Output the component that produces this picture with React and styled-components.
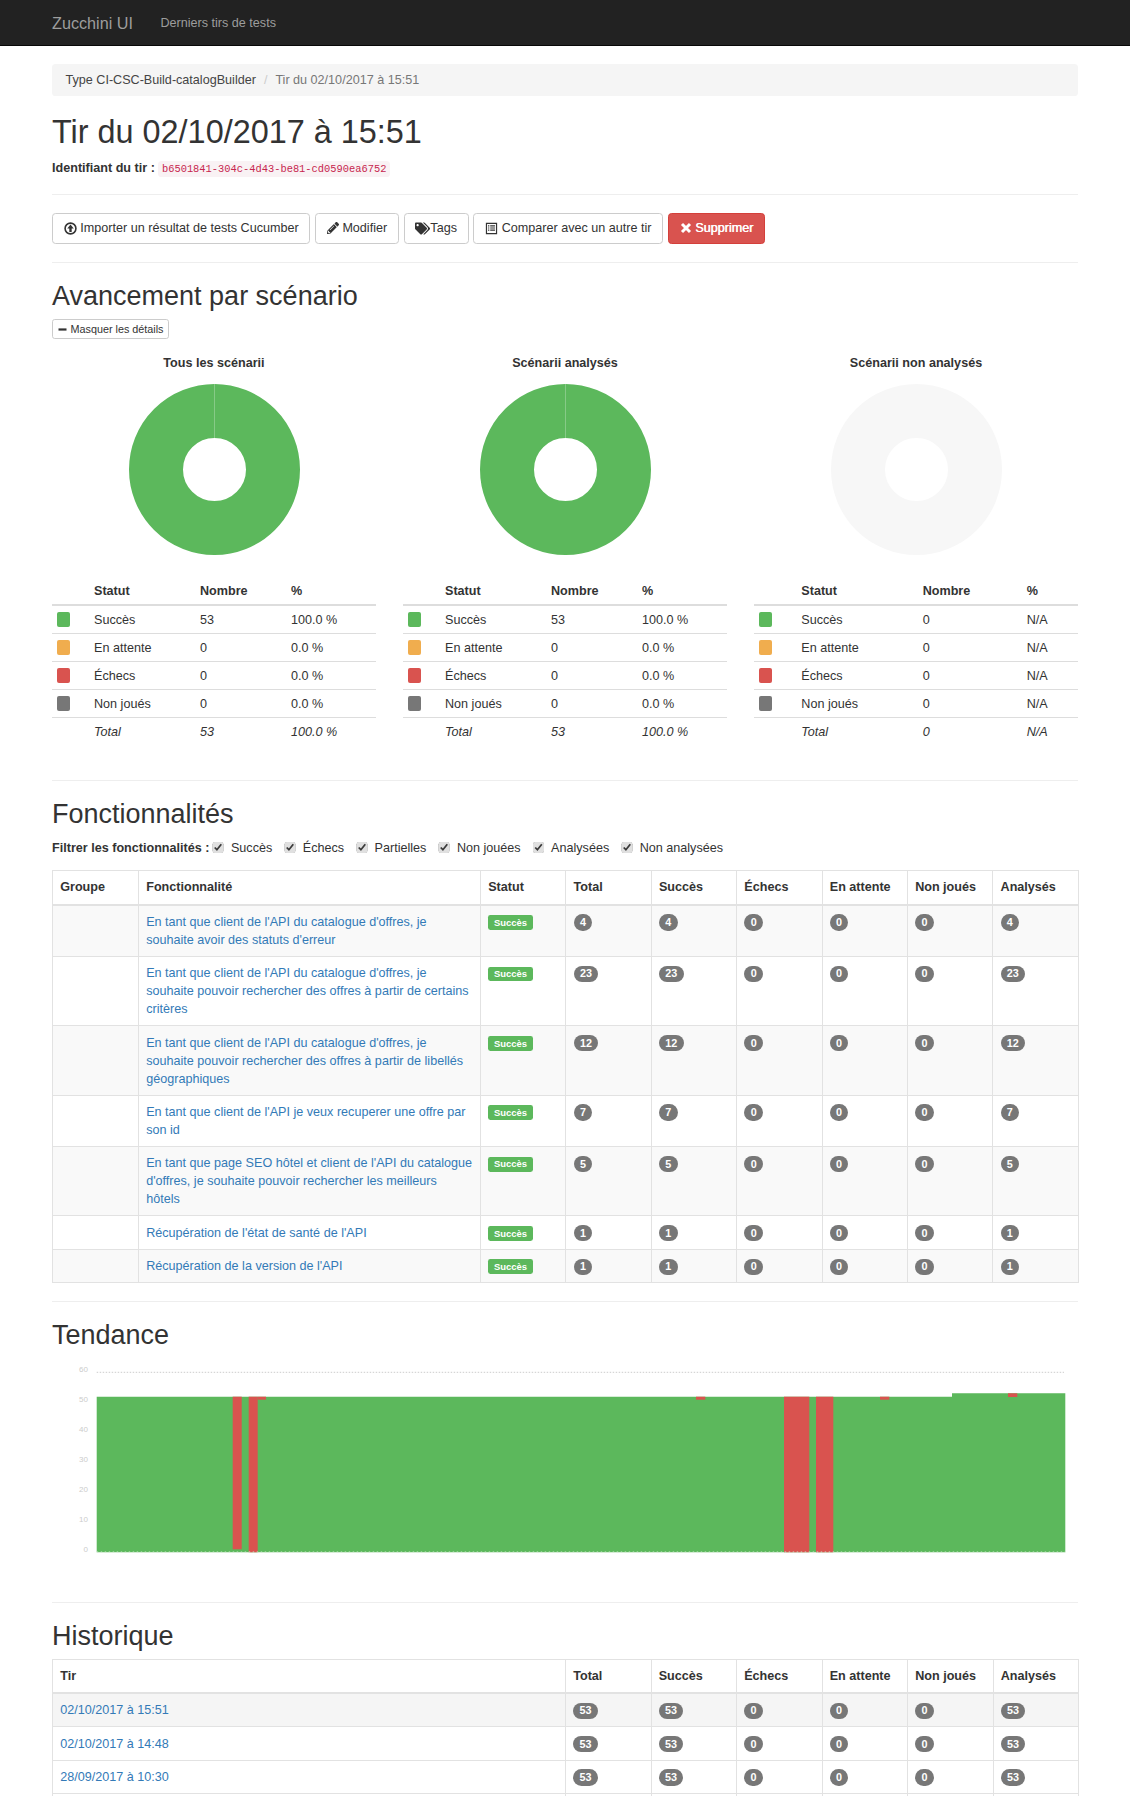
import React from "react";
import styled, { createGlobalStyle } from "styled-components";
import { FaPencilAlt, FaTags } from "react-icons/fa";

const GREEN = "#5cb85c";
const ORANGE = "#f0ad4e";
const RED = "#d9534f";
const GREY = "#777777";

const features = [
  { name: "En tant que client de l'API du catalogue d'offres, je souhaite avoir des statuts d'erreur", total: 4 },
  { name: "En tant que client de l'API du catalogue d'offres, je souhaite pouvoir rechercher des offres à partir de certains critères", total: 23 },
  { name: "En tant que client de l'API du catalogue d'offres, je souhaite pouvoir rechercher des offres à partir de libellés géographiques", total: 12 },
  { name: "En tant que client de l'API je veux recuperer une offre par son id", total: 7 },
  { name: "En tant que page SEO hôtel et client de l'API du catalogue d'offres, je souhaite pouvoir rechercher les meilleurs hôtels", total: 5 },
  { name: "Récupération de l'état de santé de l'API", total: 1 },
  { name: "Récupération de la version de l'API", total: 1 },
];

const history = ["02/10/2017 à 15:51", "02/10/2017 à 14:48", "28/09/2017 à 10:30"];
const countHeaders = ["Total", "Succès", "Échecs", "En attente", "Non joués", "Analysés"];
const filters = ["Succès", "Échecs", "Partielles", "Non jouées", "Analysées", "Non analysées"];

const charts = [
  { title: "Tous les scénarii", color: GREEN, seam: true, counts: [53, 0, 0, 0], total: 53, pct: ["100.0 %", "0.0 %", "0.0 %", "0.0 %"], totalPct: "100.0 %", widths: [37.5, 106, 91, 89.5] },
  { title: "Scénarii analysés", color: GREEN, seam: true, counts: [53, 0, 0, 0], total: 53, pct: ["100.0 %", "0.0 %", "0.0 %", "0.0 %"], totalPct: "100.0 %", widths: [37.5, 106, 91, 89.5] },
  { title: "Scénarii non analysés", color: "#f7f7f7", seam: false, counts: [0, 0, 0, 0], total: 0, pct: ["N/A", "N/A", "N/A", "N/A"], totalPct: "N/A", widths: [42.8, 121.4, 104, 55.8] },
];

const statuses = [
  { label: "Succès", color: GREEN },
  { label: "En attente", color: ORANGE },
  { label: "Échecs", color: RED },
  { label: "Non joués", color: GREY },
];

const trendLabels = [60, 50, 40, 30, 20, 10, 0];
const redBars = [
  [180.7, 189.7, 37.7, 190.3],
  [196.7, 205.7, 37.7, 193.3],
  [205.7, 214, 37.7, 40.7],
  [644, 653.3, 37.7, 40.7],
  [732, 757.3, 37.7, 193.3],
  [764, 781.3, 37.7, 193.3],
  [828, 837.3, 37.7, 40.7],
  [956, 965.3, 34.3, 38],
];

const GlobalStyle = createGlobalStyle`
  html, body {
    margin: 0;
    background: #fff;
  }
  body {
    font-family: "Liberation Sans", Arial, sans-serif;
    font-size: 12.6px;
    line-height: 18px;
    color: #333;
  }
  #root {
    height: 1796px;
    overflow: hidden;
  }
`;

const Navbar = styled.nav`
  height: 45px;
  background: #222;
  border-bottom: 1px solid #080808;
`;

const NavInner = styled.div`
  width: 1026px;
  margin: 0 auto;
  display: flex;
  align-items: center;
  height: 45px;
`;

const Brand = styled.a`
  color: #9d9d9d;
  font-size: 16.2px;
  margin-right: 27.5px;
`;

const NavLink = styled.a`
  color: #9d9d9d;
`;

const Container = styled.main`
  width: 1026px;
  margin: 0 auto;
  padding-top: 18px;
`;

const Breadcrumb = styled.ol`
  list-style: none;
  margin: 0 0 18px;
  padding: 7.2px 13.5px;
  background: #f5f5f5;
  border-radius: 3.6px;
  display: flex;
`;

const Crumb = styled.li`
  color: ${(p) => (p.$active ? "#777" : "#444")};
`;

const CrumbSep = styled.span`
  color: #ccc;
  padding: 0 8px;
`;

const Title = styled.h1`
  font-size: 32.4px;
  font-weight: 500;
  line-height: 35.64px;
  margin: 0 0 8px;
  padding-top: 1px;
`;

const IdLine = styled.p`
  margin: 0;
  height: 17px;
  font-weight: 700;
`;

const Code = styled.code`
  font-family: "Liberation Mono", monospace;
  font-weight: 400;
  font-size: 10.4px;
  padding: 1.8px 3.6px;
  color: #c7254e;
  background: #f9f2f4;
  border-radius: 3.6px;
`;

const Rule = styled.hr`
  border: 0;
  border-top: 1px solid #eee;
  margin: 18px 0;
`;

const Toolbar = styled.div`
  display: flex;
  gap: 4.6px;
`;

const Button = styled.button`
  display: inline-flex;
  align-items: center;
  gap: ${(p) => (p.$tight ? "0" : "3.5px")};
  height: 30.6px;
  padding: 0 10.8px;
  font: inherit;
  color: ${(p) => (p.$danger ? "#fff" : "#333")};
  text-shadow: ${(p) => (p.$danger ? "0.4px 0 0 #fff" : "none")};
  background: ${(p) => (p.$danger ? RED : "#fff")};
  border: 1px solid ${(p) => (p.$danger ? "#d43f3a" : "#ccc")};
  border-radius: 3.6px;
  white-space: nowrap;
`;

const SmallButton = styled.button`
  display: flex;
  align-items: center;
  gap: 4px;
  height: 19.8px;
  padding: 0 4.5px;
  font-family: inherit;
  font-size: 10.8px;
  color: #333;
  background: #fff;
  border: 1px solid #ccc;
  border-radius: 2.7px;
`;

const SectionTitle = styled.h2`
  font-size: 27px;
  font-weight: 500;
  line-height: 29.7px;
  margin: 0 0 ${(p) => p.$bottom ?? 8}px;
  padding-top: 1px;
`;

const ChartGrid = styled.div`
  display: grid;
  grid-template-columns: repeat(3, 324px);
  gap: 27px;
  margin-top: 14.4px;
`;

const ChartColumn = styled.section`
  min-width: 0;
`;

const ChartTitle = styled.div`
  text-align: center;
  font-weight: 700;
  margin-bottom: 12.2px;
`;

const DonutSlot = styled.div`
  display: flex;
  justify-content: center;
  margin-bottom: 22.5px;
`;

const StatsTable = styled.table`
  width: 100%;
  table-layout: fixed;
  border-collapse: collapse;
  margin-bottom: 16.5px;

  th, td {
    box-sizing: border-box;
    padding: 4.5px;
    text-align: left;
    line-height: 18px;
  }
  th {
    padding: 5px 4.5px 4px;
    border-bottom: 2px solid #ddd;
  }
  td {
    border-top: 1px solid #ddd;
  }
  tbody tr:first-child td {
    border-top: 0;
  }
`;

const TotalRow = styled.tr`
  font-style: italic;
`;

const Swatch = styled.span`
  display: block;
  width: 13.5px;
  height: 15.3px;
  border-radius: 2px;
  background: ${(p) => p.$color};
`;

const FilterRow = styled.div`
  display: flex;
  align-items: center;
  margin-bottom: 13.5px;
`;

const FilterLabel = styled.strong`
  margin-right: 3px;
`;

const FilterOption = styled.label`
  display: inline-flex;
  align-items: center;
  margin-right: 12px;
`;

const FilterCheck = styled.input`
  width: 11.5px;
  height: 11.5px;
  margin: 0 7px 0 0;
  accent-color: #e0e0e0;
`;

const DataTable = styled.table`
  width: 100%;
  table-layout: fixed;
  border-collapse: collapse;
  margin-bottom: 18px;

  th, td {
    box-sizing: border-box;
    padding: 7.2px;
    text-align: left;
    vertical-align: top;
    line-height: 18px;
    border: 1px solid #e2e2e2;
  }
  thead th {
    border-bottom-width: 2px;
  }
`;

const Cell = styled.th`
  width: ${(p) => p.$w}px;
`;

const FeatureRow = styled.tr`
  background: ${(p) => (p.$odd ? "#f9f9f9" : "#fff")};
`;

const HistoryRow = styled.tr`
  background: ${(p) => (p.$current ? "#f5f5f5" : "#fff")};
`;

const Link = styled.a`
  color: #337ab7;
  text-decoration: none;
`;

const Label = styled.span`
  display: inline-block;
  padding: 2.6px 5.7px 2.8px;
  font-size: 9.45px;
  font-weight: 700;
  line-height: 1;
  color: #fff;
  background: ${GREEN};
  border-radius: 2.4px;
`;

const Badge = styled.span`
  display: inline-block;
  min-width: 6px;
  padding: 2.7px 6.3px;
  font-size: 10.8px;
  font-weight: 700;
  line-height: 1;
  text-align: center;
  color: #fff;
  background: ${GREY};
  border-radius: 9px;
  vertical-align: middle;
`;

const TrendSvg = styled.svg`
  display: block;
  width: 1026px;
  height: 225px;
`;

const TrendLabel = styled.text`
  font-size: 8px;
  fill: #ccc;
  text-anchor: end;
`;

const UploadIcon = () => (
  <svg width="13" height="13" viewBox="0 0 12 12">
    <circle cx="6" cy="6" r="5" fill="none" stroke="#333" strokeWidth="1.5" />
    <path d="M6 2.4 9 6H7.1v3.2H4.9V6H3z" fill="#333" />
  </svg>
);

const ListIcon = () => (
  <svg width="13" height="13" viewBox="0 0 12 12">
    <path fillRule="evenodd" fill="#333" d="M.8.8h10.4v10.4H.8zM1.9 1.9v8.2h8.2V1.9z" />
    <path fill="#333" d="M2.8 3h1.2v1.1H2.8zM4.8 3h4.4v1.1H4.8zM2.8 5h1.2v1.1H2.8zM4.8 5h4.4v1.1H4.8zM2.8 7h1.2v1.1H2.8zM4.8 7h4.4v1.1H4.8z" />
  </svg>
);

const MinusIcon = () => (
  <svg width="9" height="9" viewBox="0 0 9 9">
    <rect x="0.5" y="3.4" width="8" height="2.2" fill="#333" />
  </svg>
);

const RemoveIcon = () => (
  <svg width="12" height="12" viewBox="0 0 12 12">
    <path d="M2 2 10 10M10 2 2 10" stroke="#fff" strokeWidth="3" />
  </svg>
);

const Donut = ({ color, seam }) => (
  <svg width="171" height="171" viewBox="0 0 171 171">
    <circle cx="85.5" cy="85.5" r="58.5" fill="none" stroke={color} strokeWidth="54" />
    {seam && <line x1="85.5" y1="0" x2="85.5" y2="54" stroke="#a5d6a5" strokeWidth="0.6" />}
  </svg>
);

const Trend = () => (
  <TrendSvg viewBox="0 0 1026 225">
    {trendLabels.map((value, i) => (
      <TrendLabel key={value} x="36" y={13 + i * 30}>
        {value}
      </TrendLabel>
    ))}
    <line x1="44.7" y1="13.3" x2="1012" y2="13.3" stroke="#ccc" strokeDasharray="1.5 1.5" />
    <polygon points="44.7,37.7 900,37.7 900,34.3 1013.3,34.3 1013.3,193.3 44.7,193.3" fill={GREEN} />
    {redBars.map(([x1, x2, y1, y2]) => (
      <rect key={x1} x={x1} y={y1} width={x2 - x1} height={y2 - y1} fill={RED} />
    ))}
    <line x1="44.7" y1="193" x2="1013.3" y2="193" stroke="#cfe8cf" strokeDasharray="1.5 2.5" />
  </TrendSvg>
);

const StatsCard = ({ chart }) => (
  <ChartColumn>
    <ChartTitle>{chart.title}</ChartTitle>
    <DonutSlot>
      <Donut color={chart.color} seam={chart.seam} />
    </DonutSlot>
    <StatsTable>
      <thead>
        <tr>
          <Cell $w={chart.widths[0]} />
          <Cell $w={chart.widths[1]}>Statut</Cell>
          <Cell $w={chart.widths[2]}>Nombre</Cell>
          <Cell $w={chart.widths[3]}>%</Cell>
        </tr>
      </thead>
      <tbody>
        {statuses.map((status, i) => (
          <tr key={status.label}>
            <td>
              <Swatch $color={status.color} />
            </td>
            <td>{status.label}</td>
            <td>{chart.counts[i]}</td>
            <td>{chart.pct[i]}</td>
          </tr>
        ))}
        <TotalRow>
          <td />
          <td>Total</td>
          <td>{chart.total}</td>
          <td>{chart.totalPct}</td>
        </TotalRow>
      </tbody>
    </StatsTable>
  </ChartColumn>
);

const App = () => {
  return (
    <>
      <GlobalStyle />
      <Navbar>
        <NavInner>
          <Brand>Zucchini UI</Brand>
          <NavLink>Derniers tirs de tests</NavLink>
        </NavInner>
      </Navbar>
      <Container>
        <Breadcrumb>
          <Crumb>Type CI-CSC-Build-catalogBuilder</Crumb>
          <CrumbSep>/</CrumbSep>
          <Crumb $active>Tir du 02/10/2017 à 15:51</Crumb>
        </Breadcrumb>
        <Title>Tir du 02/10/2017 à 15:51</Title>
        <IdLine>
          Identifiant du tir : <Code>b6501841-304c-4d43-be81-cd0590ea6752</Code>
        </IdLine>
        <Rule />
        <Toolbar>
          <Button>
            <UploadIcon /> Importer un résultat de tests Cucumber
          </Button>
          <Button>
            <FaPencilAlt size={12} /> Modifier
          </Button>
          <Button $tight>
            <FaTags size={15} />
            Tags
          </Button>
          <Button>
            <ListIcon /> Comparer avec un autre tir
          </Button>
          <Button $danger>
            <RemoveIcon /> Supprimer
          </Button>
        </Toolbar>
        <Rule />
        <SectionTitle>Avancement par scénario</SectionTitle>
        <SmallButton>
          <MinusIcon /> Masquer les détails
        </SmallButton>
        <ChartGrid>
          {charts.map((chart) => (
            <StatsCard key={chart.title} chart={chart} />
          ))}
        </ChartGrid>
        <Rule />
        <SectionTitle $bottom={9.3}>Fonctionnalités</SectionTitle>
        <FilterRow>
          <FilterLabel>Filtrer les fonctionnalités :</FilterLabel>
          {filters.map((filter) => (
            <FilterOption key={filter}>
              <FilterCheck type="checkbox" defaultChecked />
              {filter}
            </FilterOption>
          ))}
        </FilterRow>
        <DataTable>
          <thead>
            <tr>
              <Cell $w={86}>Groupe</Cell>
              <Cell $w={342}>Fonctionnalité</Cell>
              <Cell $w={85.4}>Statut</Cell>
              {countHeaders.map((header) => (
                <Cell key={header} $w={85.4}>{header}</Cell>
              ))}
            </tr>
          </thead>
          <tbody>
            {features.map((feature, i) => (
              <FeatureRow key={feature.name} $odd={i % 2 === 0}>
                <td />
                <td>
                  <Link>{feature.name}</Link>
                </td>
                <td>
                  <Label>Succès</Label>
                </td>
                <td><Badge>{feature.total}</Badge></td>
                <td><Badge>{feature.total}</Badge></td>
                <td><Badge>0</Badge></td>
                <td><Badge>0</Badge></td>
                <td><Badge>0</Badge></td>
                <td><Badge>{feature.total}</Badge></td>
              </FeatureRow>
            ))}
          </tbody>
        </DataTable>
        <Rule />
        <SectionTitle>Tendance</SectionTitle>
        <Trend />
        <Rule />
        <SectionTitle $bottom={7}>Historique</SectionTitle>
        <DataTable>
          <thead>
            <tr>
              <Cell $w={513}>Tir</Cell>
              {countHeaders.map((header) => (
                <Cell key={header} $w={85.5}>{header}</Cell>
              ))}
            </tr>
          </thead>
          <tbody>
            {history.map((date, i) => (
              <HistoryRow key={date} $current={i === 0}>
                <td>
                  <Link>{date}</Link>
                </td>
                <td><Badge>53</Badge></td>
                <td><Badge>53</Badge></td>
                <td><Badge>0</Badge></td>
                <td><Badge>0</Badge></td>
                <td><Badge>0</Badge></td>
                <td><Badge>53</Badge></td>
              </HistoryRow>
            ))}
            <HistoryRow>
              <td>&nbsp;</td>
              <td />
              <td />
              <td />
              <td />
              <td />
              <td />
            </HistoryRow>
          </tbody>
        </DataTable>
      </Container>
    </>
  );
};

export default App;
